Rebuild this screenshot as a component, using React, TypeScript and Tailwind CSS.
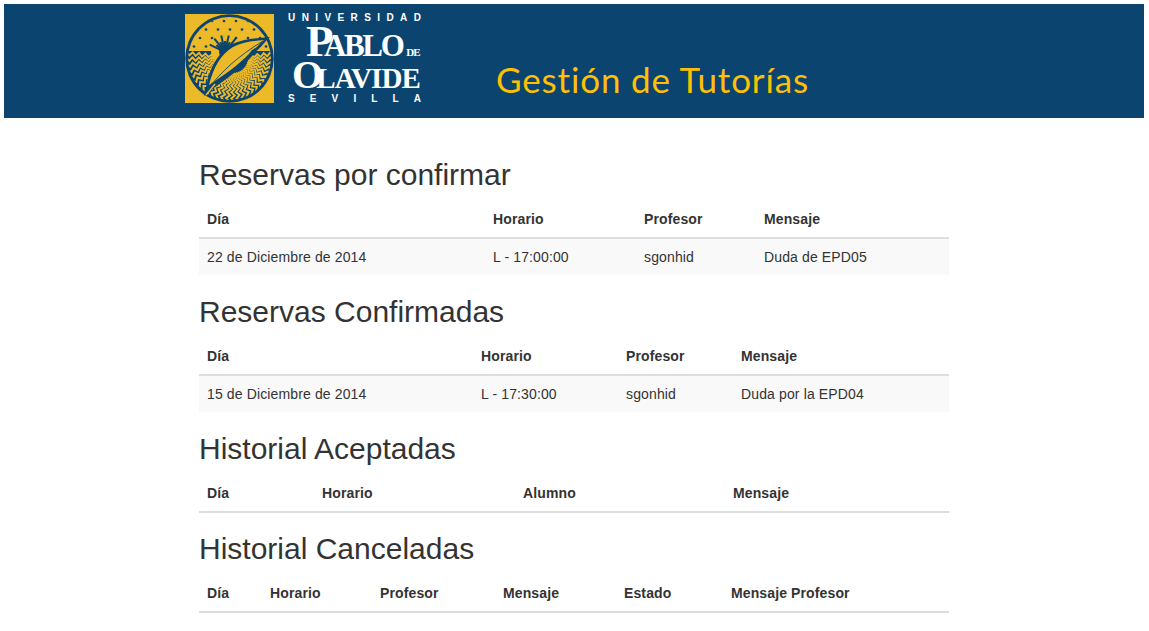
import React from "react";

const NAVY = "#0c4470";
const GOLD = "#ecb928";

// one wavy ray, running outwards from the centre of the emblem
const wavyRay = (cx: number, cy: number, angle: number, r0: number, r1: number) => {
  const ux = Math.cos(angle);
  const uy = Math.sin(angle);
  const px = -uy;
  const py = ux;
  let d = "";
  let side = 1;
  for (let r = r0; r <= r1; r += 3.2) {
    const amp = Math.min(1.7, 0.3 + r * 0.05) * side;
    const x = cx + ux * r + px * amp;
    const y = cy + uy * r + py * amp;
    d += `${d ? " L" : "M"}${x.toFixed(2)} ${y.toFixed(2)}`;
    side = -side;
  }
  return d;
};

function Emblem() {
  const dots: [number, number][] = [];
  for (let r = 0; r < 4; r++) {
    for (let c = 0; c < 8; c++) {
      dots.push([3 + c * 12 + (r % 2 ? 6 : 0), 7 + r * 8.5]);
    }
  }
  const rays = Array.from({ length: 11 }, (_, i) => {
    const a = Math.PI + 0.45 + (i * (Math.PI - 0.9)) / 10;
    const len = i % 2 ? 6 : 12;
    const cx = 40;
    const cy = 38;
    return `M${cx + Math.cos(a) * 5} ${cy + Math.sin(a) * 5} L${cx + Math.cos(a) * (5 + len)} ${cy + Math.sin(a) * (5 + len)}`;
  });
  const wavy = Array.from({ length: 27 }, (_, i) => wavyRay(48, 44, -0.1 + (i * (Math.PI + 0.2)) / 26, 15, 54));
  return (
    <svg width="89" height="89" viewBox="0 0 89 89" className="block shrink-0">
      <defs>
        <clipPath id="disc">
          <circle cx="44.5" cy="44.5" r="41.4" />
        </clipPath>
      </defs>
      <rect width="89" height="89" fill={GOLD} />
      <circle cx="44.5" cy="44.5" r="44.2" fill={NAVY} />
      <g clipPath="url(#disc)">
        <rect y="0" width="89" height="37" fill={GOLD} />
        {dots.map(([x, y], i) => (
          <circle key={i} cx={x} cy={y} r="1.35" fill={NAVY} />
        ))}
        <circle cx="40" cy="37" r="14" fill={GOLD} />
        <circle cx="40" cy="38" r="6" fill={NAVY} />
        <g stroke={NAVY} strokeWidth="2">
          {rays.map((d, i) => (
            <path key={i} d={d} />
          ))}
        </g>
        <g fill="none" stroke={GOLD} strokeWidth="1.9">
          {wavy.map((d, i) => (
            <path key={i} d={d} />
          ))}
        </g>
      </g>
      <path d="M19 82 L23 64 C 27 50 35 37 47 30 C 58 25 72 24 85 23 C 79 28 77 33 70 38 C 66 45 60 48 55 54 C 46 62 32 71 19 82 Z" fill={NAVY} />
      <path d="M24 71 C 28 54 36 40 48 33 C 58 28 69 27 79 26 C 74 30 72 34 67 36 C 63 42 57 46 52 51 C 44 58 34 64 24 71 Z" fill={GOLD} />
      <path d="M23 75 C 36 58 53 42 78 27" fill="none" stroke={NAVY} strokeWidth="0.9" />
      <path d="M21 81 L 30 70" fill="none" stroke={GOLD} strokeWidth="1.5" />
    </svg>
  );
}

function Spaced({ text, className }: { text: string; className: string }) {
  return (
    <div className={`flex justify-between h-[9px] text-[10px] leading-[9px] font-bold font-['Liberation_Sans',sans-serif] ${className}`}>
      {text.split("").map((c, i) => (
        <span key={i}>{c}</span>
      ))}
    </div>
  );
}

function Logo() {
  return (
    <div className="flex gap-[14px] h-[89px] shrink-0">
      <Emblem />
      <div className="w-[133px] flex flex-col text-white">
        <Spaced text="UNIVERSIDAD" className="-mt-[1px]" />
        <div className="font-['Liberation_Serif',serif] font-bold h-[71px] mt-[1px] whitespace-nowrap">
          <div className="h-[35px] flex items-baseline pl-[18px] text-[31px] leading-[36px] tracking-[-2.4px]">
            <span className="text-[45px] leading-[36px] -mr-[7px]">P</span>
            <span>ABLO</span>
            <span className="text-[11px] tracking-[-1px] ml-[4px]">DE</span>
          </div>
          <div className="h-[33px] flex items-baseline pl-[4px] text-[29px] leading-[33px] tracking-[-0.9px]">
            <span className="text-[40px] leading-[33px] -mr-[6px]">O</span>
            <span>LAVIDE</span>
          </div>
        </div>
        <Spaced text="SEVILLA" className="mt-[3px]" />
      </div>
    </div>
  );
}

function DataTable({
  headers,
  widths,
  row,
  last,
}: {
  headers: string[];
  widths: number[];
  row?: string[];
  last?: boolean;
}) {
  return (
    <table className={`w-[750px] table-fixed border-collapse text-sm leading-5 text-[#333] ${last ? "mb-[19px]" : "mb-5"}`}>
      <colgroup>
        {widths.map((w, i) => (
          <col key={i} style={{ width: w }} />
        ))}
      </colgroup>
      <thead>
        <tr>
          {headers.map((h) => (
            <th key={h} className="p-2 text-left font-bold tracking-[0.12px] border-b-2 border-[#ddd] whitespace-nowrap">
              {h}
            </th>
          ))}
        </tr>
      </thead>
      {row && (
        <tbody>
          <tr className="bg-[#f9f9f9]">
            {row.map((c) => (
              <td key={c} className="p-2 tracking-[0.13px] whitespace-nowrap">
                {c}
              </td>
            ))}
          </tr>
        </tbody>
      )}
    </table>
  );
}

function Section({
  title,
  ...t
}: {
  title: string;
  headers: string[];
  widths: number[];
  row?: string[];
  last?: boolean;
}) {
  return (
    <section>
      <h2 className="text-[30px] leading-[33px] mb-[10px] text-[#333] font-normal">{title}</h2>
      <DataTable {...t} />
    </section>
  );
}

export default function App() {
  return (
    <div className="bg-white min-h-[631px] p-1 font-['Liberation_Sans',Arial,sans-serif]">
      <header className="h-[114px] w-[1140px] bg-[#0c4470] flex pl-[181px] pt-[10px]">
        <Logo />
        <h1 className="ml-[75px] mt-[43px] text-[#fdc006] text-[35px] leading-[44px] tracking-[0.85px] font-normal font-['Lato',sans-serif] whitespace-nowrap">
          Gestión de Tutorías
        </h1>
      </header>
      <main className="pl-[195px] pt-10 h-[505px] overflow-hidden">
        <Section
          title="Reservas por confirmar"
          headers={["Día", "Horario", "Profesor", "Mensaje"]}
          widths={[286, 151, 120, 193]}
          row={["22 de Diciembre de 2014", "L - 17:00:00", "sgonhid", "Duda de EPD05"]}
        />
        <Section
          title="Reservas Confirmadas"
          headers={["Día", "Horario", "Profesor", "Mensaje"]}
          widths={[274, 145, 115, 216]}
          row={["15 de Diciembre de 2014", "L - 17:30:00", "sgonhid", "Duda por la EPD04"]}
        />
        <Section
          title="Historial Aceptadas"
          headers={["Día", "Horario", "Alumno", "Mensaje"]}
          widths={[115, 201, 210, 224]}
          last
        />
        <Section
          title="Historial Canceladas"
          headers={["Día", "Horario", "Profesor", "Mensaje", "Estado", "Mensaje Profesor"]}
          widths={[63, 110, 123, 121, 107, 226]}
        />
      </main>
    </div>
  );
}
